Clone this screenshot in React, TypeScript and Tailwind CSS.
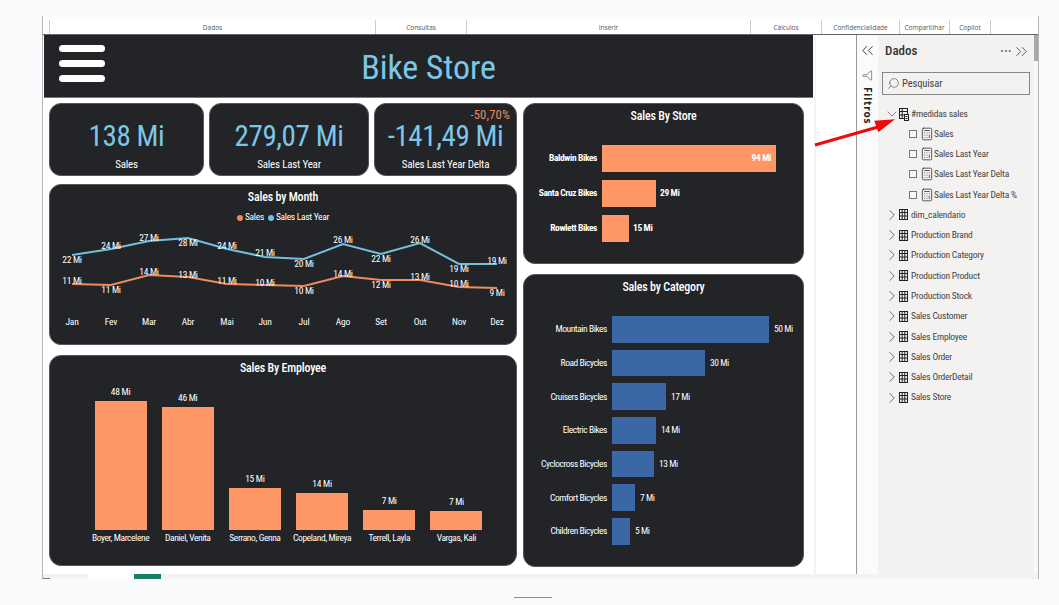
import { Calculator, ChevronDown, ChevronRight, ChevronsLeft, ChevronsRight, Filter, Search } from "lucide-react";

const ribbon = [
  { label: "Dados", w: "w-[327px]" },
  { label: "Consultas", w: "w-[91px]" },
  { label: "Inserir", w: "w-[284px]" },
  { label: "Cálculos", w: "w-[71px]" },
  { label: "Confidencialidade", w: "w-[78px]" },
  { label: "Compartilhar", w: "w-[50px]" },
  { label: "Copilot", w: "w-[41px]" },
];

const months = ["Jan", "Fev", "Mar", "Abr", "Mai", "Jun", "Jul", "Ago", "Set", "Out", "Nov", "Dez"];
const monthX = [71, 110, 148, 187, 226, 264, 303, 342, 380, 419, 458, 496];
// y = line position, ly = label position, both in page pixels
const lastYear = [
  { y: 255, ly: 259, t: "22 Mi" },
  { y: 249, ly: 245, t: "24 Mi" },
  { y: 241, ly: 237, t: "27 Mi" },
  { y: 238, ly: 242, t: "28 Mi" },
  { y: 249, ly: 245, t: "24 Mi" },
  { y: 257, ly: 252, t: "21 Mi" },
  { y: 259, ly: 263, t: "20 Mi" },
  { y: 244, ly: 239, t: "26 Mi" },
  { y: 254, ly: 258, t: "22 Mi" },
  { y: 243, ly: 239, t: "26 Mi" },
  { y: 264, ly: 268, t: "19 Mi" },
  { y: 264, ly: 260, t: "19 Mi" },
];
const sales = [
  { y: 284, ly: 280, t: "11 Mi" },
  { y: 285, ly: 289, t: "11 Mi" },
  { y: 275, ly: 271, t: "14 Mi" },
  { y: 277, ly: 274, t: "13 Mi" },
  { y: 284, ly: 280, t: "11 Mi" },
  { y: 285, ly: 282, t: "10 Mi" },
  { y: 286, ly: 290, t: "10 Mi" },
  { y: 276, ly: 273, t: "14 Mi" },
  { y: 280, ly: 284, t: "12 Mi" },
  { y: 280, ly: 276, t: "13 Mi" },
  { y: 287, ly: 283, t: "10 Mi" },
  { y: 288, ly: 292, t: "9 Mi" },
];

const employees = [
  { name: "Boyer, Marcelene", value: "48 Mi", h: 129 },
  { name: "Daniel, Venita", value: "46 Mi", h: 123 },
  { name: "Serrano, Genna", value: "15 Mi", h: 42 },
  { name: "Copeland, Mireya", value: "14 Mi", h: 37 },
  { name: "Terrell, Layla", value: "7 Mi", h: 20 },
  { name: "Vargas, Kali", value: "7 Mi", h: 19 },
];
const stores = [
  { name: "Baldwin Bikes", value: "94 Mi", w: 174 },
  { name: "Santa Cruz Bikes", value: "29 Mi", w: 54 },
  { name: "Rowlett Bikes", value: "15 Mi", w: 27 },
];
const categories = [
  { name: "Mountain Bikes", value: "50 Mi", w: 157 },
  { name: "Road Bicycles", value: "30 Mi", w: 93 },
  { name: "Cruisers Bicycles", value: "17 Mi", w: 54 },
  { name: "Electric Bikes", value: "14 Mi", w: 44 },
  { name: "Cyclocross Bicycles", value: "13 Mi", w: 42 },
  { name: "Comfort Bicycles", value: "7 Mi", w: 23 },
  { name: "Children Bicycles", value: "5 Mi", w: 18 },
];
const measures = ["Sales", "Sales Last Year", "Sales Last Year Delta", "Sales Last Year Delta %"];
const tables = [
  "dim_calendario",
  "Production Brand",
  "Production Category",
  "Production Product",
  "Production Stock",
  "Sales Customer",
  "Sales Employee",
  "Sales Order",
  "Sales OrderDetail",
  "Sales Store",
];

const din = "font-['Roboto',sans-serif] [font-stretch:75%]";
const card = "rounded-xl border border-[#55565a] bg-[#222427] text-white";
const cardTitle = "pt-[4px] text-center text-[12px] font-medium leading-[16px] tracking-[-0.2px]";

function TableIcon() {
  return (
    <svg width="9" height="11" viewBox="0 0 9 11" fill="none" stroke="#222" strokeWidth="1" className="shrink-0">
      <rect x="0.5" y="0.5" width="8" height="10" />
      <path d="M0.5 3.5h8M0.5 7h8M3.2 0.5v10M5.8 0.5v10" />
    </svg>
  );
}

function MeasureTableIcon() {
  return (
    <svg width="10" height="13" viewBox="0 0 10 13" fill="none" stroke="#222" strokeWidth="1" className="shrink-0">
      <rect x="0.5" y="0.5" width="8" height="10" />
      <path d="M0.5 3.5h8M0.5 7h8M3.2 0.5v10" />
      <rect x="5.5" y="6.5" width="4" height="6" fill="#f3f2f1" />
      <path d="M6.5 8.5h2M6.5 10.5h2" />
    </svg>
  );
}

function Kpi({ value, label, className, delta }: { value: string; label: string; className: string; delta?: string }) {
  return (
    <div className={`${card} ${className} relative flex h-[73px] flex-col items-center`}>
      {delta && <span className="absolute right-[6px] top-[5px] text-[12.5px] leading-[12px] tracking-[0.2px] text-[#f08a5d]">{delta}</span>}
      <span className="mt-[19px] whitespace-nowrap text-[29px] leading-[26px] tracking-[-0.4px] text-[#7cc7e8]">{value}</span>
      <span className="mt-[9px] whitespace-nowrap text-[11px] leading-[14px] tracking-[-0.2px]">{label}</span>
    </div>
  );
}

function App() {
  const toX = (i: number) => monthX[i] - 49;
  const toY = (y: number) => y - 226;
  return (
    <div className="relative h-[605px] w-[1059px] overflow-hidden bg-[#f9fafc]">
      <div className="ml-[42px] mt-[16px] flex h-[563px] w-[997px] flex-col border-x border-[#b5b5b5] bg-[#fdfdfd] pt-[4px]">
        {/* ribbon group labels */}
        <div className="flex h-[14px] shrink-0 bg-white pl-[6px] font-['Open_Sans',sans-serif] text-[6.5px] leading-[12px] text-[#555]">
          {ribbon.map((r, i) => (
            <div key={r.label} className={`${r.w} border-r border-[#ccc] pt-[2px] text-center ${i === 0 ? "border-l" : ""}`}>
              {r.label}
            </div>
          ))}
        </div>

        <div className="flex h-[540px] shrink-0 border-t border-[#666]">
          {/* report canvas */}
          <div className="w-[813px] shrink-0 bg-white">
            <div className={`${din} h-full w-[773px] border-r-[2px] border-[#f4f4f4] pl-[1px]`}>
              <div className="relative flex h-[63px] w-[769px] items-center justify-center border-b border-[#777] bg-[#222427]">
                <div className="absolute left-[15px] top-[10px] flex flex-col gap-[8px]">
                  <div className="h-[7px] w-[46px] rounded-full bg-white" />
                  <div className="h-[7px] w-[46px] rounded-full bg-white" />
                  <div className="h-[7px] w-[46px] rounded-full bg-white" />
                </div>
                <span className="pt-[3px] text-[34px] tracking-[-0.1px] text-[#7cc7e8]">Bike Store</span>
              </div>

              <div className="flex gap-[6px] pl-[5px] pt-[5px]">
                <div className="flex w-[468px] flex-col">
                  <div className="flex gap-[5px]">
                    <Kpi className="w-[155px]" value="138 Mi" label="Sales" />
                    <Kpi className="w-[160px]" value="279,07 Mi" label="Sales Last Year" />
                    <Kpi className="w-[143px]" value="-141,49 Mi" label="Sales Last Year Delta" delta="-50,70%" />
                  </div>

                  <div className={`${card} mt-[8px] flex h-[161px] flex-col`}>
                    <div className={`h-[23px] ${cardTitle}`}>Sales by Month</div>
                    <div className="flex h-[18px] items-center justify-center gap-[2px] pt-[1px] text-[9.5px] tracking-[-0.3px]">
                      <span className="h-[6px] w-[6px] rounded-full bg-[#f08a5d]" />
                      <span className="mr-[2px]">Sales</span>
                      <span className="h-[6px] w-[6px] rounded-full bg-[#74c0dc]" />
                      <span>Sales Last Year</span>
                    </div>
                    <svg viewBox="0 0 466 118" className="h-[118px] w-[466px]">
                      <polyline fill="none" stroke="#74c0dc" strokeWidth="2" points={lastYear.map((p, i) => `${toX(i)},${toY(p.y)}`).join(" ")} />
                      <polyline fill="none" stroke="#f08a5d" strokeWidth="2" points={sales.map((p, i) => `${toX(i)},${toY(p.y)}`).join(" ")} />
                      {[...lastYear, ...sales].map((p, i) => (
                        <text key={i} x={toX(i % 12)} y={toY(p.ly)} fill="#fff" fontSize="9.5" letterSpacing="-0.3" textAnchor="middle" dominantBaseline="central">
                          {p.t}
                        </text>
                      ))}
                      {months.map((m, i) => (
                        <text key={m} x={toX(i)} y={toY(321)} fill="#fff" fontSize="9.5" letterSpacing="-0.2" textAnchor="middle" dominantBaseline="central">
                          {m}
                        </text>
                      ))}
                    </svg>
                  </div>

                  <div className={`${card} mt-[10px] h-[211px]`}>
                    <div className={`h-[28px] ${cardTitle}`}>Sales By Employee</div>
                    <div className="ml-[37px] grid h-[162px] w-[403px] grid-cols-6">
                      {employees.map((e) => (
                        <div key={e.name} className="flex flex-col items-center justify-end">
                          <span className="mb-[3px] text-[9.5px] leading-[12px] tracking-[-0.3px]">{e.value}</span>
                          <div className="w-[52px] bg-[#fe9666]" style={{ height: e.h }} />
                          <span className="h-[16px] whitespace-nowrap text-[9.5px] leading-[16px] tracking-[-0.4px]">{e.name}</span>
                        </div>
                      ))}
                    </div>
                  </div>
                </div>

                <div className="flex w-[281px] flex-col">
                  <div className={`${card} h-[161px]`}>
                    <div className={`h-[41px] ${cardTitle}`}>Sales By Store</div>
                    <div className="flex flex-col gap-[8px]">
                      {stores.map((s, i) => (
                        <div key={s.name} className="flex h-[27px] items-center text-[9.5px] font-bold tracking-[-0.4px]">
                          <span className="w-[73px] whitespace-nowrap text-right">{s.name}</span>
                          <div className="ml-[5px] flex h-full items-center justify-end bg-[#fe9666] pr-[5px]" style={{ width: s.w }}>
                            {i === 0 && s.value}
                          </div>
                          {i > 0 && <span className="ml-[4px]">{s.value}</span>}
                        </div>
                      ))}
                    </div>
                  </div>

                  <div className={`${card} mt-[10px] h-[293px]`}>
                    <div className={`h-[41px] ${cardTitle}`}>Sales by Category</div>
                    <div className="flex flex-col gap-[7px]">
                      {categories.map((c) => (
                        <div key={c.name} className="flex h-[26.7px] items-center text-[9.5px] tracking-[-0.45px]">
                          <span className="w-[83px] whitespace-nowrap text-right">{c.name}</span>
                          <div className="ml-[5px] h-full bg-[#3b67a6]" style={{ width: c.w }} />
                          <span className="ml-[5px]">{c.value}</span>
                        </div>
                      ))}
                    </div>
                  </div>
                </div>
              </div>
            </div>
          </div>

          {/* filters strip */}
          <div className="flex w-[22px] shrink-0 flex-col items-center border-l border-[#999] bg-[#fbfbfb] text-[#333]">
            <ChevronsLeft size={19} strokeWidth={1.2} className="mt-[6px]" />
            <Filter size={11} strokeWidth={1.2} className="mt-[10px] rotate-90" />
            <span className="mt-[6px] font-['Open_Sans',sans-serif] text-[10px] font-bold leading-[12px] tracking-[0.8px] text-[#222] [writing-mode:vertical-rl]">Filtros</span>
          </div>

          {/* data pane */}
          <div className={`${din} w-[156px] shrink-0 bg-[#f3f2f1] text-[#444]`}>
            <div className="flex h-[32px] items-center justify-between pl-[7px] pr-[3px]">
              <span className="text-[13px] font-medium leading-[16px] text-[#333]">Dados</span>
              <div className="flex items-center gap-0">
                <span className="text-[12px] font-bold leading-[10px] tracking-[0.5px] text-[#666]">···</span>
                <ChevronsRight size={19} strokeWidth={1.2} className="text-[#555]" />
              </div>
            </div>
            <div className="ml-[4px] mt-[5px] flex h-[23px] w-[148px] items-center gap-[2px] border border-[#8a8886] bg-[#f3f2f1] pl-[4px] text-[10.5px] tracking-[-0.1px]">
              <Search size={13} strokeWidth={1.1} className="-scale-x-100" />
              <span>Pesquisar</span>
            </div>
            <div className="mt-[9.5px] flex h-[19.5px] items-center pl-[6px] text-[9.5px] tracking-[-0.2px]">
              <ChevronDown size={16} strokeWidth={1} className="shrink-0" />
              <span className="-ml-[1px]">
                <MeasureTableIcon />
              </span>
              <span className="ml-[2px]">#medidas sales</span>
            </div>
            {measures.map((m) => (
              <div key={m} className="flex h-[20.2px] items-center pl-[31px] text-[9.5px] tracking-[-0.2px]">
                <span className="h-[8px] w-[8px] shrink-0 border border-[#777] bg-[#f8f8f8]" />
                <Calculator size={14} strokeWidth={1.25} className="ml-[3px] shrink-0 text-[#222]" />
                <span className="whitespace-nowrap">{m}</span>
              </div>
            ))}
            {tables.map((t) => (
              <div key={t} className="flex h-[20.3px] items-center pl-[5px] text-[9.5px] tracking-[-0.2px]">
                <ChevronRight size={18} strokeWidth={1} className="shrink-0" />
                <span className="-ml-[2px]">
                  <TableIcon />
                </span>
                <span className="ml-[3px]">{t}</span>
              </div>
            ))}
          </div>

          {/* scrollbar */}
          <div className="flex-1 bg-[#f8f8f8]">
            <div className="h-[26px] bg-[#a9a9a9]" />
          </div>
        </div>

        {/* sheet tabs */}
        <div className="flex h-[5px] shrink-0 bg-[#f3f2f1]">
          <div className="w-[45px]">
            <div className="mt-[4px] h-px w-[7px] bg-[#777]" />
          </div>
          <div className="w-[46px] bg-white" />
          <div className="w-[27px] bg-[#14806a]" />
        </div>
      </div>

      {/* annotation arrow */}
      <svg className="absolute left-[810px] top-[110px]" width="90" height="40" viewBox="0 0 90 40">
        <path d="M5 35 L68 17" stroke="#ee0a0a" strokeWidth="3" />
        <path d="M85 9.3 L64.3 10.7 L68.3 22.3 Z" fill="#ee0a0a" />
      </svg>

      <div className="absolute left-[514px] top-[597px] h-px w-[38px] bg-[#888]" />
    </div>
  );
}

export default App;
